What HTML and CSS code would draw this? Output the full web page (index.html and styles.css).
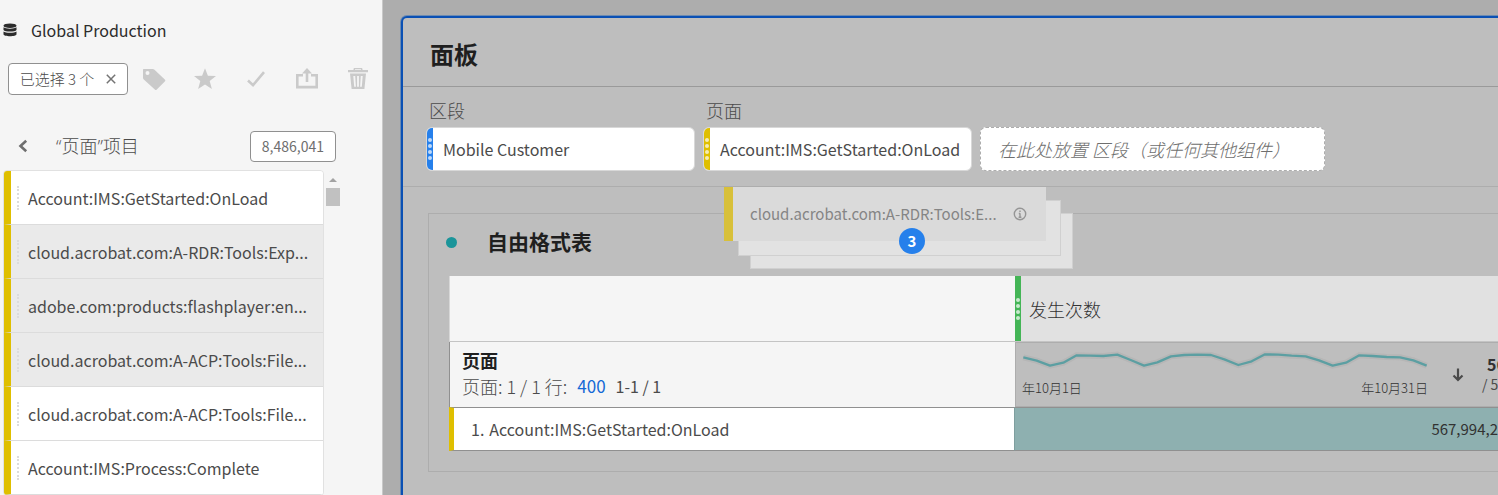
FILE: index.html
```html
<!DOCTYPE html>
<html lang="zh-CN">
<head>
<meta charset="utf-8">
<title>Workspace</title>
<link rel="stylesheet" href="styles.css">
</head>
<body>
<div class="app">
  <aside class="sidebar">
    <div class="source">
      <svg class="source-icon" viewBox="0 0 14 14" aria-hidden="true">
        <ellipse cx="7" cy="2.700" rx="6.500" ry="2.300"/>
        <path d="M.5 4.300c2 1.800 11 1.800 13 0V7c-1 2-12 2-13 0z"/>
        <path d="M.5 8.500c2 1.800 11 1.800 13 0V11.200c0 2.600-13 2.600-13 0z"/>
      </svg>
      <span>Global Production</span>
    </div>
    <div class="toolbar">
      <button class="chip" type="button">已选择 3 个
        <svg class="chip-x" viewBox="0 0 10 10" aria-hidden="true"><path d="M.8.8l8.400 8.400M9.200.8L.8 9.200"/></svg>
      </button>
      <div class="tools">
        <button class="tool" type="button" aria-label="标记"><svg viewBox="0 0 24 24"><path fill-rule="evenodd" d="M1.500 2h9.200c.8 0 1.200.2 1.800.8l10.300 9.700c.7.700.7 1.300 0 2l-8 8c-.7.700-1.300.7-2 0L1.800 12.500c-.6-.6-.8-1-.8-1.800V2.500zM5.500 4a2 2 0 1 0 0 4 2 2 0 0 0 0-4z"/></svg></button>
        <button class="tool" type="button" aria-label="收藏"><svg viewBox="0 0 24 24"><path d="M12 1.200l2.900 7.500 8.100.4-6.300 5 2.200 7.900-6.900-4.500L5.100 22l2.200-7.900L1 9.100l8.100-.4z"/></svg></button>
        <button class="tool" type="button" aria-label="批准"><svg viewBox="0 0 24 24"><path class="line" d="M4 13.500l5 4.700L20 5.200"/></svg></button>
        <button class="tool" type="button" aria-label="共享"><svg viewBox="0 0 24 24"><path class="line" d="M8 8.200H2.300v11.900h19.400V8.200H16M12 15V4"/><path d="M12 1l5 5.500H7z"/></svg></button>
        <button class="tool" type="button" aria-label="删除"><svg viewBox="0 0 24 24"><path fill-rule="evenodd" d="M7.500 3V2.200C7.500 1.400 8 1 8.700 1h6.600c.7 0 1.200.4 1.200 1.200V3H22v2.300H2V3zM9 2.300V3h6v-.7zM4 6.500h16L18.400 22H5.600zM7.300 9l.9 10.800h1.700L9.200 9zM11.100 9v10.800h1.800V9zM14.800 9l-.7 10.800h1.700L16.700 9z"/></svg></button>
      </div>
    </div>
    <div class="crumb">
      <button class="back" type="button" aria-label="返回"><svg viewBox="0 0 10 14"><path d="M8.200 1.800L2.500 7l5.700 5.200"/></svg></button>
      <h2 class="crumb-title">“页面”项目</h2>
      <span class="count">8,486,041</span>
    </div>
    <div class="list-wrap">
      <ul class="list">
        <li class="item"><span class="grip"></span><span class="item-text">Account:IMS:GetStarted:OnLoad</span></li>
        <li class="item selected"><span class="grip"></span><span class="item-text">cloud.acrobat.com:A-RDR:Tools:Exp...</span></li>
        <li class="item selected"><span class="grip"></span><span class="item-text">adobe.com:products:flashplayer:en...</span></li>
        <li class="item selected"><span class="grip"></span><span class="item-text">cloud.acrobat.com:A-ACP:Tools:File...</span></li>
        <li class="item"><span class="grip"></span><span class="item-text">cloud.acrobat.com:A-ACP:Tools:File...</span></li>
        <li class="item"><span class="grip"></span><span class="item-text">Account:IMS:Process:Complete</span></li>
      </ul>
      <div class="scroll"><span class="scroll-up"></span><span class="scroll-thumb"></span></div>
    </div>
  </aside>

  <main class="canvas">
    <section class="panel">
      <header class="panel-head"><h1 class="panel-title">面板</h1></header>
      <div class="filters">
        <div class="filter">
          <span class="filter-label">区段</span>
          <div class="pill"><span class="handle blue"><i></i><i></i><i></i><i></i></span>Mobile Customer</div>
        </div>
        <div class="filter">
          <span class="filter-label">页面</span>
          <div class="pill"><span class="handle yellow"><i></i><i></i><i></i><i></i></span>Account:IMS:GetStarted:OnLoad</div>
        </div>
        <div class="drop">在此处放置 区段（或任何其他组件）</div>
      </div>
      <div class="panel-body">
        <section class="viz">
          <header class="viz-head"><span class="dot"></span><h2 class="viz-title">自由格式表</h2></header>
          <table class="grid">
            <colgroup><col class="col-dim"><col></colgroup>
            <thead>
              <tr class="row-metric">
                <td class="blank"></td>
                <th class="metric" scope="col"><div class="metric-in"><span class="handle green"><i></i><i></i><i></i><i></i></span>发生次数</div></th>
              </tr>
              <tr class="row-total">
                <th class="dim" scope="col">
                  <div class="dim-name">页面</div>
                  <div class="paging"><span class="page-of">页面: 1 / 1 行:</span><a class="rows" href="#rows">400</a><span>1-1 / 1</span></div>
                </th>
                <td class="summary">
                  <div class="summary-in">
                    <div class="trend">
                      <svg class="spark" viewBox="66 256 1218 51" aria-hidden="true">
                        <polyline class="halo" points="70,275 110,285 150,300 190,291 230,269 270,270 310,271 352,267 392,283 432,300 472,290 513,272 553,268 593,267 633,268 673,281 715,298 755,287 795,266 835,267 875,270 917,272 957,284 998,300 1038,291 1078,269 1118,271 1160,274 1200,275 1240,284 1280,300"/>
                        <polyline class="trace" points="70,275 110,285 150,300 190,291 230,269 270,270 310,271 352,267 392,283 432,300 472,290 513,272 553,268 593,267 633,268 673,281 715,298 755,287 795,266 835,267 875,270 917,272 957,284 998,300 1038,291 1078,269 1118,271 1160,274 1200,275 1240,284 1280,300"/>
                      </svg>
                      <div class="dates"><span>年10月1日</span><span>年10月31日</span></div>
                    </div>
                    <svg class="sort" viewBox="0 0 12 14" aria-hidden="true"><path d="M6 .5v11M1.500 7.500L6 12l4.500-4.500"/></svg>
                    <div class="totals"><strong>56</strong><span>/ 5</span></div>
                  </div>
                </td>
              </tr>
            </thead>
            <tbody>
              <tr class="row-data">
                <th class="name" scope="row"><span class="num">1.</span>Account:IMS:GetStarted:OnLoad</th>
                <td class="value">567,994,2</td>
              </tr>
            </tbody>
          </table>
        </section>
      </div>
    </section>

    <div class="drag">
      <div class="ghost third"></div>
      <div class="ghost second"></div>
      <div class="ghost first">
        <span class="ghost-text">cloud.acrobat.com:A-RDR:Tools:E...</span>
        <svg class="info" viewBox="0 0 14 14" aria-hidden="true"><circle cx="7" cy="7" r="5.700"/><path d="M7 6.200v4M7 3.600v1.400M5.800 6.500H7M5.600 10.200h2.800"/></svg>
      </div>
      <span class="badge">3</span>
    </div>
  </main>
</div>
</body>
</html>
```
FILE: styles.css
```css
* { box-sizing: border-box; }

body {
  margin: 0;
  font-family: "Noto Sans CJK SC", "Noto Sans", sans-serif;
  font-size: 16px;
  line-height: 24px;
  color: #4b4b4b;
  background: #adadad;
}

button { margin: 0; padding: 0; border: 0; background: none; font: inherit; color: inherit; }
h1, h2, ul { margin: 0; padding: 0; }

.app { display: flex; min-height: 100vh; overflow: hidden; }

/* Sidebar */
.sidebar {
  flex: none;
  width: 383px;
  padding-top: 18px;
  background: #f5f5f5;
  border-right: 1px solid #c9c9c9;
}

.source { display: flex; align-items: center; gap: 14px; padding-left: 3px; color: #2c2c2c; }
.source-icon { width: 14px; height: 14px; fill: #2c2c2c; }

.toolbar { display: flex; align-items: center; gap: 14px; margin-top: 21px; padding-left: 8px; }
.chip {
  display: flex;
  align-items: center;
  justify-content: center;
  gap: 12px;
  width: 120px;
  height: 32px;
  border: 1px solid #909090;
  border-radius: 4px;
  background: #fff;
  font-size: 15px;
  font-weight: 300;
  color: #4b4b4b;
}
.chip-x { width: 10px; height: 10px; fill: none; stroke: #747474; stroke-width: 1.5; }
.tools { display: flex; gap: 27px; }
.tool { width: 24px; height: 24px; }
.tool svg { display: block; fill: #cacaca; }
.tool .line { fill: none; stroke: #cacaca; stroke-width: 2.6; }

.crumb { display: flex; align-items: center; height: 32px; margin-top: 35px; padding: 0 46px 0 18px; }
.back { width: 10px; height: 14px; }
.back svg { display: block; fill: none; stroke: #6e6e6e; stroke-width: 2.6; }
.crumb-title { margin-left: 28px; font-family: "Open Sans", "Noto Sans CJK SC", sans-serif; font-size: 18px; font-weight: 300; }
.count {
  margin-left: auto;
  padding: 0 11px;
  border: 1px solid #909090;
  border-radius: 4px;
  background: #fff;
  font-size: 14px;
  line-height: 29px;
  color: #6e6e6e;
}

.list-wrap { display: flex; gap: 2px; margin-top: 8px; padding-left: 3px; }
.list { width: 321px; list-style: none; border: 1px solid #e1e1e1; border-radius: 4px; overflow: hidden; }
.item {
  display: flex;
  align-items: center;
  height: 54px;
  padding-right: 12px;
  border-left: 7px solid #dfbf00;
  border-bottom: 1px solid #dcdcdc;
  background: #fff;
}
.item.selected { background: #eaeaea; }
.grip { height: 24px; margin: 0 9px 0 6px; border-left: 2px dotted #dcdcdc; }
.scroll { display: flex; flex-direction: column; align-items: center; gap: 6px; width: 14px; padding-top: 8px; }
.scroll-up { border: 4px solid transparent; border-top: 0; border-bottom-color: #a3a3a3; }
.scroll-thumb { width: 14px; height: 18px; background: #c1c1c1; }

/* Canvas */
.canvas { position: relative; flex: 1; min-width: 0; display: flex; padding: 16px 0 0 18px; overflow: hidden; }
.panel {
  flex: 1;
  min-width: 0;
  border: 2px solid #0a50b4;
  border-right: 0;
  border-bottom: 0;
  border-radius: 6px 0 0 0;
  box-shadow: 0 0 0 1px #6c8bb2;
  background: #bebebe;
}
.panel-head { padding: 21px 27px 17px; border-bottom: 1px solid #9a9a9a; }
.panel-title { font-size: 24px; line-height: 30px; font-weight: 700; color: #1f1f1f; }

.filters { display: flex; align-items: flex-end; gap: 8px; padding: 11px 23px 15px; border-bottom: 1px solid #adadad; }
.filter { flex: none; width: 269px; }
.filter-label { display: block; padding: 0 0 5px 3px; font-size: 18px; font-weight: 300; }
.pill {
  display: flex;
  align-items: center;
  gap: 10px;
  height: 44px;
  border: 1px solid #d8d8d8;
  border-radius: 6px;
  overflow: hidden;
  background: #fff;
  white-space: nowrap;
}
.handle { display: flex; flex: none; flex-direction: column; align-items: center; justify-content: center; gap: 2px; align-self: stretch; width: 6px; }
.handle i { width: 4px; height: 4px; border-radius: 50%; background: rgba(255, 255, 255, 0.7); }
.blue { background: #2680eb; }
.yellow { background: #dfbf00; }
.green { background: #44b556; }
.drop {
  width: 345px;
  height: 44px;
  padding-left: 17px;
  border: 1px dashed #adadad;
  border-radius: 6px;
  background: #fff;
  font-size: 18px;
  font-weight: 300;
  font-style: italic;
  line-height: 42px;
  white-space: nowrap;
  color: #6e6e6e;
}

.panel-body { padding: 26px 0 0 25px; }
.viz { padding: 14px 0 20px 20px; border: 1px solid #adadad; border-right: 0; }
.viz-head { display: flex; align-items: center; gap: 30px; height: 28px; }
.dot { flex: none; width: 11px; height: 11px; margin-left: -3px; border-radius: 50%; background: #1b959a; }
.viz-title { font-size: 21px; line-height: 24px; padding-bottom: 2px; font-weight: 700; color: #1f1f1f; }

.grid { width: 100%; margin-top: 20px; border-collapse: separate; border-spacing: 0; table-layout: fixed; }
.grid th, .grid td { padding: 0; font-weight: 400; text-align: left; vertical-align: middle; }
.col-dim { width: 566px; }
.row-metric { height: 66px; }
.row-total { height: 65px; }
.row-data { height: 44px; }
.grid .blank, .grid .dim { background: #f5f5f5; border-left: 1px solid #d8d8d8; }
.grid .blank, .grid .metric { border-bottom: 1px solid #c4c4c4; }
.grid .metric { background: #e1e1e1; }
.metric-in { display: flex; align-items: center; gap: 8px; height: 65px; font-size: 18px; font-weight: 300; color: #323232; }
.grid .dim { padding: 0 0 6px 12px; border-left-color: #909090; }
.dim-name { font-size: 18px; font-weight: 700; line-height: 28px; color: #1f1f1f; }
.paging { display: flex; gap: 10px; }
.page-of { font-size: 18px; font-weight: 300; }
.rows { font-size: 17px; color: #1469d6; text-decoration: none; }
.summary-in { display: flex; align-items: center; height: 65px; overflow: hidden; padding-left: 6px; border: 1px solid #adadad; border-right: 0; }
.trend { flex: none; width: 406px; }
.spark { display: block; width: 406px; height: 17px; overflow: visible; fill: none; }
.halo { stroke: #b6b6b6; stroke-width: 18; }
.trace { stroke: #5c9fa2; stroke-width: 7; stroke-linejoin: round; }
.dates { display: flex; justify-content: space-between; margin-top: 9px; font-size: 13px; line-height: 22px; font-weight: 300; color: #323232; }
.sort { flex: none; width: 12px; height: 14px; margin: 0 18px 0 24px; fill: none; stroke: #4b4b4b; stroke-width: 2.2; }
.totals { display: flex; flex: none; flex-direction: column; padding-bottom: 2px; font-size: 14px; line-height: 20px; }
.totals strong { padding-left: 5px; font-size: 16px; color: #323232; }
.grid .name { padding-left: 17px; border: 1px solid #909090; border-left: 5px solid #dfbf00; border-right-color: #7f9f9f; background: #fff; }
.num { margin-right: 5px; }
.grid .value { border-top: 1px solid #909090; border-bottom: 1px solid #909090; background: #8eb0b0; text-align: right; font-size: 15px; color: #323232; }

/* Dragged stack */
.drag { position: absolute; left: 341px; top: 187px; width: 350px; height: 82px; }
.ghost { position: absolute; width: 323px; height: 56px; background: #e2e2e2; border: 1px solid #d0d0d0; }
.third { left: 26px; top: 26px; }
.second { left: 14px; top: 13px; }
.first {
  left: 0;
  top: 0;
  display: flex;
  align-items: center;
  justify-content: space-between;
  width: 322px;
  height: 54px;
  padding: 0 19px 0 17px;
  border: 0;
  border-left: 9px solid #d8c03a;
  background: #dadada;
  color: #858585;
}
.ghost-text { font-size: 15px; }
.info { width: 14px; height: 14px; fill: none; stroke: #959595; stroke-width: 1.4; }
.badge {
  position: absolute;
  left: 175px;
  top: 41px;
  width: 26px;
  height: 26px;
  border-radius: 50%;
  background: #2680eb;
  color: #fff;
  font-weight: 700;
  font-size: 15px;
  line-height: 26px;
  text-align: center;
}
```
